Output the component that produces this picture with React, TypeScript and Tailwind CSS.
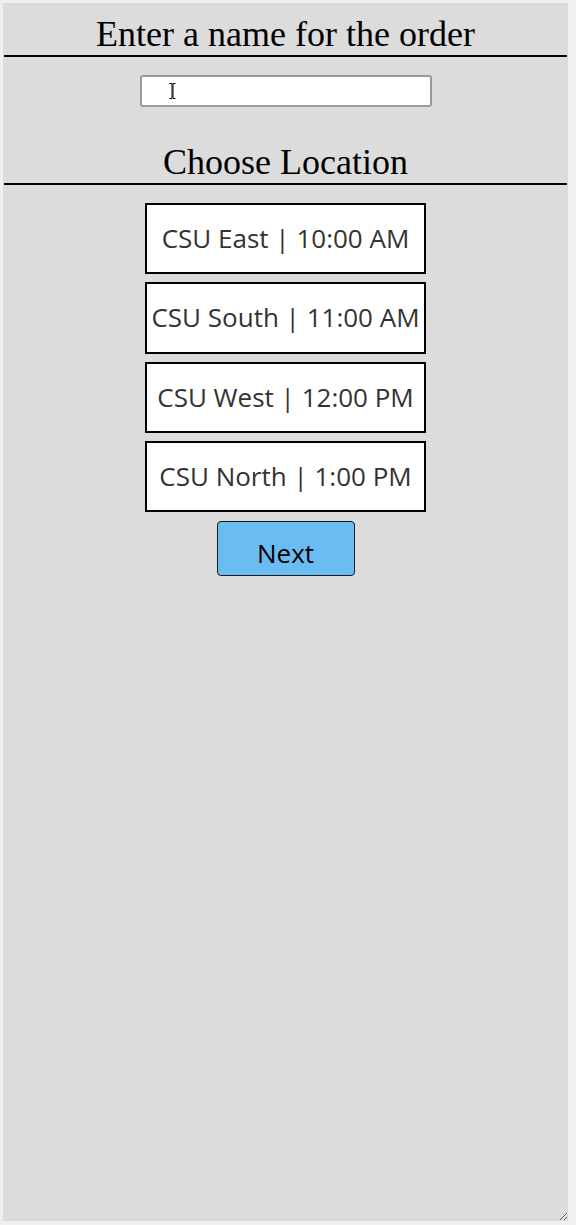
import React from "react";

const locations = [
  "CSU East | 10:00 AM",
  "CSU South | 11:00 AM",
  "CSU West | 12:00 PM",
  "CSU North | 1:00 PM",
];

export default function App() {
  return (
    <div className="w-[576px] h-[1225px] bg-[#f0f0f0] pt-[3px] pl-[3px]">
      <div className="relative w-[565px] h-[1218px] bg-[#dcdcdc] resize overflow-hidden flex flex-col items-center">
        <h1
          className="w-[563px] mt-[12px] text-center text-[36px] leading-[38px] text-black border-b-2 border-black pb-[2px]"
          style={{ fontFamily: '"Liberation Serif", "Times New Roman", serif' }}
        >
          Enter a name for the order
        </h1>
        <div className="relative mt-[18px]">
          <input
            type="text"
            className="block w-[292px] h-[32px] bg-white border-2 border-[#999aa0] rounded-[3px] outline-none"
          />
          <svg
            className="absolute left-[29px] top-[8px]"
            width="7"
            height="16"
            viewBox="0 0 7 16"
          >
            <path d="M0.5 0.5h2.5v15h-2.5M6.5 0.5h-2.5v15h2.5" fill="none" stroke="#000" strokeWidth="1" />
          </svg>
        </div>
        <h2
          className="w-[563px] mt-[36px] text-center text-[36px] leading-[38px] text-black border-b-2 border-black pb-[2px]"
          style={{ fontFamily: '"Liberation Serif", "Times New Roman", serif' }}
        >
          Choose Location
        </h2>
        <div className="mt-[18px] flex flex-col gap-[8px]">
          {locations.map((l) => (
            <button
              key={l}
              className="w-[281px] h-[71.33px] bg-white border-2 border-black flex items-center justify-center text-[26px] text-[#333333]"
              style={{ fontFamily: '"Open Sans", "Noto Sans", sans-serif' }}
            >
              {l}
            </button>
          ))}
        </div>
        <button
          className="mt-[9px] w-[138px] h-[55px] bg-[#6cbcf4] border border-[#1a1a1a] rounded-[4px] flex items-end justify-center pb-[2px] text-[26px] text-black"
          style={{ fontFamily: '"Open Sans", "Noto Sans", sans-serif' }}
        >
          Next
        </button>
      </div>
    </div>
  );
}
